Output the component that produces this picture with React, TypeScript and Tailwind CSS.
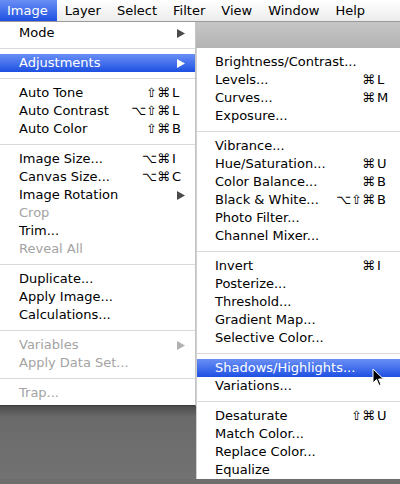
type Item =
  | { sep: true }
  | {
      sep?: false;
      label: string;
      mods?: string;
      k?: string;
      arrow?: boolean;
      disabled?: boolean;
      active?: boolean;
    };

const mainMenu: Item[] = [
  { label: 'Mode', arrow: true },
  { sep: true },
  { label: 'Adjustments', arrow: true, active: true },
  { sep: true },
  { label: 'Auto Tone', mods: '⇧⌘', k: 'L' },
  { label: 'Auto Contrast', mods: '⌥⇧⌘', k: 'L' },
  { label: 'Auto Color', mods: '⇧⌘', k: 'B' },
  { sep: true },
  { label: 'Image Size...', mods: '⌥⌘', k: 'I' },
  { label: 'Canvas Size...', mods: '⌥⌘', k: 'C' },
  { label: 'Image Rotation', arrow: true },
  { label: 'Crop', disabled: true },
  { label: 'Trim...' },
  { label: 'Reveal All', disabled: true },
  { sep: true },
  { label: 'Duplicate...' },
  { label: 'Apply Image...' },
  { label: 'Calculations...' },
  { sep: true },
  { label: 'Variables', arrow: true, disabled: true },
  { label: 'Apply Data Set...', disabled: true },
  { sep: true },
  { label: 'Trap...', disabled: true },
];

const subMenu: Item[] = [
  { label: 'Brightness/Contrast...' },
  { label: 'Levels...', mods: '⌘', k: 'L' },
  { label: 'Curves...', mods: '⌘', k: 'M' },
  { label: 'Exposure...' },
  { sep: true },
  { label: 'Vibrance...' },
  { label: 'Hue/Saturation...', mods: '⌘', k: 'U' },
  { label: 'Color Balance...', mods: '⌘', k: 'B' },
  { label: 'Black & White...', mods: '⌥⇧⌘', k: 'B' },
  { label: 'Photo Filter...' },
  { label: 'Channel Mixer...' },
  { sep: true },
  { label: 'Invert', mods: '⌘', k: 'I' },
  { label: 'Posterize...' },
  { label: 'Threshold...' },
  { label: 'Gradient Map...' },
  { label: 'Selective Color...' },
  { sep: true },
  { label: 'Shadows/Highlights...', active: true },
  { label: 'Variations...' },
  { sep: true },
  { label: 'Desaturate', mods: '⇧⌘', k: 'U' },
  { label: 'Match Color...' },
  { label: 'Replace Color...' },
  { label: 'Equalize' },
];

const menuBar = ['Layer', 'Select', 'Filter', 'View', 'Window', 'Help'];

function Arrow({ color }: { color: string }) {
  return (
    <svg width="8" height="9" viewBox="0 0 8 9">
      <path d="M0 0 L8 4.5 L0 9 Z" fill={color} />
    </svg>
  );
}

function MenuRows({ items, pl }: { items: Item[]; pl: string }) {
  return (
    <>
      {items.map((item, i) => {
        if (item.sep) {
          return (
            <div key={i} className="h-[12px] flex items-center">
              <div className="h-px w-full bg-[#dadada]" />
            </div>
          );
        }
        const color = item.active ? 'text-white' : item.disabled ? 'text-[#a3a3a3]' : 'text-black';
        return (
          <div
            key={i}
            className={`h-[18px] leading-[18px] flex items-center pr-[10px] ${pl} ${color} ${
              item.active ? 'bg-gradient-to-b from-[#6a8ef5] to-[#1d4fe2]' : ''
            }`}
          >
            <span className="flex-1 whitespace-nowrap">{item.label}</span>
            {item.k && (
              <span className="flex whitespace-nowrap">
                <span className="text-right">{item.mods}</span>
                <span className="w-[15px] pl-[2px]">{item.k}</span>
              </span>
            )}
            {item.arrow && (
              <Arrow color={item.active ? '#ffffff' : item.disabled ? '#b0b0b0' : '#4a4a4a'} />
            )}
          </div>
        );
      })}
    </>
  );
}

export default function App() {
  return (
    <div className="relative w-[400px] h-[484px] overflow-hidden bg-[#6e6e6e] font-['DejaVu_Sans',sans-serif] text-[13px]">
      <div className="h-[22px] flex items-center bg-gradient-to-b from-white to-[#ececec] border-b border-[#9a9a9a]">
        <div className="h-full flex items-center pl-[7px] pr-[9px] text-white bg-gradient-to-b from-[#6a8ef5] to-[#1d4fe2]">
          Image
        </div>
        {menuBar.map((m) => (
          <div key={m} className="px-2 text-black">
            {m}
          </div>
        ))}
      </div>

      <div className="flex">
        <div className="w-[196px] flex flex-col">
          <div className="bg-white pt-[2px] pb-[3px] border-r border-[#c4c4c4] border-b border-b-[#3a3a3a]">
            <MenuRows items={mainMenu} pl="pl-[19px]" />
          </div>
          <div className="flex-1 bg-gradient-to-b from-[#4c4c4c] via-[#6a6a6a] via-15% to-[#727272]" />
        </div>

        <div className="flex-1 flex flex-col">
          <div className="h-[26px] bg-gradient-to-b from-[#c6c6c6] to-[#b3b3b3]" />
          <div className="flex-1 bg-white pt-[5px] border-l border-[#d0d0d0]">
            <MenuRows items={subMenu} pl="pl-[18px]" />
          </div>
        </div>
      </div>

      <svg className="absolute left-[372px] top-[368px]" width="13" height="19" viewBox="0 0 13 19">
        <path
          d="M1 1 L1 15 L4.5 11.5 L7 17.5 L9 16.6 L6.6 11 L11.5 11 Z"
          fill="#000"
          stroke="#fff"
          strokeWidth="1"
          strokeLinejoin="round"
        />
      </svg>
    </div>
  );
}
